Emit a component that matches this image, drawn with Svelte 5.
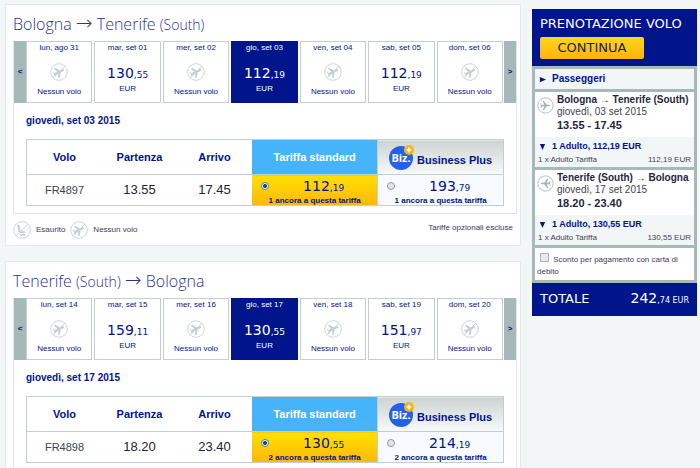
<script lang="ts">
  type Day = { label: string; price?: string; cents?: string; selected?: boolean }
  type Place = { city: string; area?: string }
  type Fare = { price: string; cents: string }

  interface Flight {
    id: string
    from: Place
    to: Place
    days: Day[]
    date: string
    number: string
    departure: string
    arrival: string
    standard: Fare
    business: Fare
    left: string
    legend: boolean
  }

  const flights: Flight[] = [
    {
      id: 'out',
      from: { city: 'Bologna' },
      to: { city: 'Tenerife', area: '(South)' },
      days: [
        { label: 'lun, ago 31' },
        { label: 'mar, set 01', price: '130', cents: '55' },
        { label: 'mer, set 02' },
        { label: 'gio, set 03', price: '112', cents: '19', selected: true },
        { label: 'ven, set 04' },
        { label: 'sab, set 05', price: '112', cents: '19' },
        { label: 'dom, set 06' }
      ],
      date: 'giovedì, set 03 2015',
      number: 'FR4897',
      departure: '13.55',
      arrival: '17.45',
      standard: { price: '112', cents: '19' },
      business: { price: '193', cents: '79' },
      left: '1 ancora a questa tariffa',
      legend: true
    },
    {
      id: 'back',
      from: { city: 'Tenerife', area: '(South)' },
      to: { city: 'Bologna' },
      days: [
        { label: 'lun, set 14' },
        { label: 'mar, set 15', price: '159', cents: '11' },
        { label: 'mer, set 16' },
        { label: 'gio, set 17', price: '130', cents: '55', selected: true },
        { label: 'ven, set 18' },
        { label: 'sab, set 19', price: '151', cents: '97' },
        { label: 'dom, set 20' }
      ],
      date: 'giovedì, set 17 2015',
      number: 'FR4898',
      departure: '18.20',
      arrival: '23.40',
      standard: { price: '130', cents: '55' },
      business: { price: '214', cents: '19' },
      left: '2 ancora a questa tariffa',
      legend: false
    }
  ]

  const trips = [
    {
      route: 'Bologna → Tenerife (South)',
      date: 'giovedì, 03 set 2015',
      hours: '13.55 - 17.45',
      amount: '112,19 EUR',
      back: false
    },
    {
      route: 'Tenerife (South) → Bologna',
      date: 'giovedì, 17 set 2015',
      hours: '18.20 - 23.40',
      amount: '130,55 EUR',
      back: true
    }
  ]

  let fares = $state<Record<string, string>>({ out: 'standard', back: 'standard' })
  let debitCard = $state(false)
</script>

{#snippet place(p: Place)}
  {p.city}{#if p.area}{' '}<small>{p.area}</small>{/if}
{/snippet}

{#snippet plane()}
  <path
    d="M5 9 L8.6 9 L6.8 4.6 L8.2 4.6 L11.4 9 L14.2 9 Q15.6 9.2 15.6 10 Q15.6 10.8 14.2 11 L11.4 11 L8.2 15.4 L6.8 15.4 L8.6 11 L6.2 11 L5 12.6 L4 12.6 L4.6 10 L4 7.4 L5 7.4 Z"
  />
{/snippet}

{#snippet noFlight()}
  <svg class="no-flight" viewBox="1 1 18 18" aria-hidden="true">
    <circle cx="10" cy="10" r="8.3" />
    <g transform="rotate(-25 10 10)">{@render plane()}</g>
    <path class="slash" d="M4 16 L16 4" />
  </svg>
{/snippet}

{#snippet fareCell(flight: Flight, kind: string, fare: Fare)}
  <td class="fare fare--{kind}">
    <label>
      <input type="radio" name="fare-{flight.id}" value={kind} bind:group={fares[flight.id]} />
      <span class="fare-price">{fare.price}<small>,{fare.cents}</small></span>
      <span class="fare-left">{flight.left}</span>
    </label>
  </td>
{/snippet}

<div class="page">
  <main>
    {#each flights as flight (flight.id)}
      <section class="card">
        <h2>{@render place(flight.from)} <span class="arrow">→</span> {@render place(flight.to)}</h2>

        <div class="panel">
          <div class="week">
            <button class="step" type="button">&lt;</button>
            <div class="days">
              {#each flight.days as day (day.label)}
                <button class="day" class:day--selected={day.selected} type="button">
                  <span class="day-label">{day.label}</span>
                  {#if day.price}
                    <span class="day-price">{day.price}<small>,{day.cents}</small></span>
                    <span>EUR</span>
                  {:else}
                    {@render noFlight()}
                    <span class="day-none">Nessun volo</span>
                  {/if}
                </button>
              {/each}
            </div>
            <button class="step" type="button">&gt;</button>
          </div>

          <h3>{flight.date}</h3>

          <table>
            <thead>
              <tr>
                <th class="col-time">Volo</th>
                <th class="col-time">Partenza</th>
                <th class="col-time">Arrivo</th>
                <th class="head-standard">Tariffa standard</th>
                <th class="head-business">
                  <div class="business">
                    <svg class="biz" viewBox="0 0 25 25" aria-hidden="true">
                      <circle cx="12" cy="13" r="12" fill="#2560e8" />
                      <text x="12" y="17" text-anchor="middle">Biz.</text>
                      <circle cx="20" cy="5" r="5" fill="#f0b61c" />
                      <path d="M20 2.6 V7.4 M17.6 5 H22.4" stroke="#fff" stroke-width="1.4" />
                    </svg>
                    <span>Business Plus</span>
                  </div>
                </th>
              </tr>
            </thead>
            <tbody>
              <tr>
                <td class="number">{flight.number}</td>
                <td class="time">{flight.departure}</td>
                <td class="time">{flight.arrival}</td>
                {@render fareCell(flight, 'standard', flight.standard)}
                {@render fareCell(flight, 'business', flight.business)}
              </tr>
            </tbody>
          </table>
        </div>

        {#if flight.legend}
          <div class="legend">
            <svg class="no-flight" viewBox="1 1 18 18" aria-hidden="true">
              <circle cx="10" cy="10" r="8.3" />
              <path d="M5 5 H7.4 L8.6 11.2 H13 V13 H7 Z M8 14 H13.4 V15.4 H8 Z" />
              <path class="slash" d="M4 16 L16 4" />
            </svg>
            <span>Esaurito</span>
            {@render noFlight()}
            <span>Nessun volo</span>
            <span class="legend-note">Tariffe opzionali escluse</span>
          </div>
        {/if}
      </section>
    {/each}
  </main>

  <aside>
    <header>
      <h1>PRENOTAZIONE VOLO</h1>
      <button class="continue" type="button">CONTINUA</button>
    </header>

    <div class="summary">
      <button class="toggle toggle--closed" type="button">
        <svg viewBox="0 0 8 8" aria-hidden="true"><path d="M1 1 L8 4 L1 7 Z" /></svg>
        Passeggeri
      </button>

      {#each trips as trip (trip.route)}
        <div class="trip">
          <div class="trip-info">
            <svg class="trip-icon" viewBox="0 0 20 20" aria-hidden="true">
              <circle cx="10" cy="10" r="9" />
              <g transform={trip.back ? 'rotate(180 10 10)' : undefined}>{@render plane()}</g>
            </svg>
            <div>
              <p class="trip-route">{trip.route}</p>
              <p class="trip-date">{trip.date}</p>
              <p class="trip-hours">{trip.hours}</p>
            </div>
          </div>
          <button class="toggle" type="button">
            <svg viewBox="0 0 8 8" aria-hidden="true"><path d="M1 1 H7 L4 8 Z" /></svg>
            1 Adulto, {trip.amount}
          </button>
          <p class="trip-fare"><span>1 x Adulto Tariffa</span><span>{trip.amount}</span></p>
        </div>
      {/each}

      <label class="debit">
        <input type="checkbox" bind:checked={debitCard} />
        Sconto per pagamento con carta di debito
      </label>
    </div>

    <footer>
      <span class="total-label">TOTALE</span>
      <span class="total">242<small>,74 EUR</small></span>
    </footer>
  </aside>
</div>

<style>
  :global(body) {
    background: #f3f6f6;
  }

  .page {
    --navy: #00148c;
    --line: #c3cfce;
    --steel: #a6b8b7;
    display: grid;
    grid-template-columns: minmax(0, 1fr) 165px;
    align-items: start;
    gap: 11px;
    padding: 4px 3px 0 5px;
    color: var(--navy);
    font-family: 'Liberation Sans', Arial, sans-serif;
    font-size: 8px;
    line-height: 12px;
  }

  h1,
  h2,
  h3,
  p {
    margin: 0;
  }

  button {
    padding: 0;
    border: none;
    background: none;
    color: inherit;
    font: inherit;
    cursor: pointer;
  }

  main {
    display: grid;
    gap: 15px;
  }

  .card {
    padding: 6px 3px 6px 7px;
    border: 1px solid #e4e9e9;
    background: #fff;
  }

  h2 {
    padding-bottom: 3px;
    color: #2a349c;
    font-family: 'Open Sans', sans-serif;
    font-size: 16px;
    font-weight: 300;
    line-height: 26px;
  }

  h2 small {
    font-size: 14px;
  }

  .arrow {
    font-family: 'DejaVu Sans', sans-serif;
    font-size: 20px;
    line-height: 20px;
  }

  .panel {
    padding-bottom: 7px;
    border: 1px solid #dfe5e5;
    border-top: none;
  }

  .week {
    display: flex;
    height: 62px;
  }

  .step {
    width: 12px;
    background: var(--steel);
    font-weight: 700;
  }

  .days {
    display: flex;
    flex: 1;
    gap: 2px;
    padding-right: 1px;
  }

  .day {
    display: flex;
    flex: 1;
    flex-direction: column;
    align-items: center;
    border: 1px solid var(--line);
    background: #fff;
  }

  .day--selected {
    border-color: var(--navy);
    background: var(--navy);
    color: #fff;
  }

  .day-label {
    margin-bottom: 9px;
  }

  .day-price {
    font-family: 'DejaVu Sans', Verdana, sans-serif;
    font-size: 14px;
    line-height: 20px;
  }

  .day-price small,
  .fare-price small {
    font-size: 9px;
    line-height: 9px;
  }

  .no-flight {
    flex: none;
    width: 18px;
    height: 18px;
    fill: #c3ced4;
  }

  .no-flight circle {
    fill: none;
    stroke: #cbd5da;
    stroke-width: 1;
  }

  .slash {
    fill: none;
    stroke: #cbd5da;
    stroke-width: 1;
  }

  .day-none {
    padding-top: 5px;
  }

  h3 {
    padding: 12px;
    font-size: 10px;
    font-weight: 700;
    line-height: 12px;
  }

  table {
    width: calc(100% - 24px);
    margin: 0 12px;
    border: 1px solid var(--line);
    border-collapse: collapse;
    table-layout: fixed;
  }

  th {
    height: 34px;
    padding: 0;
    border-bottom: 1px solid var(--line);
    font-size: 11px;
  }

  td {
    height: 30px;
    padding: 0;
    text-align: center;
  }

  .col-time {
    width: 75px;
  }

  .head-standard {
    background: #46b4fb;
    color: #fff;
  }

  .head-business {
    border-left: 1px solid var(--line);
    background: linear-gradient(#cdd2d2, #f8f9fa);
  }

  .business {
    display: flex;
    align-items: center;
    justify-content: center;
    gap: 3px;
  }

  .business span {
    padding-top: 6px;
  }

  .biz {
    width: 25px;
    height: 25px;
  }

  .biz text {
    fill: #fff;
    font-family: 'Open Sans', sans-serif;
    font-size: 11px;
    font-weight: 700;
  }

  .number {
    color: #42434f;
    font-size: 11px;
  }

  .time {
    color: #22232f;
    font-size: 13px;
  }

  .fare--standard {
    background: linear-gradient(#ffe000, #fdb70c);
  }

  .fare--business {
    border-left: 1px solid var(--line);
    background: #f7fafe;
  }

  .fare label {
    display: grid;
    grid-template-columns: 9px 1fr;
    padding: 0 9px;
    cursor: pointer;
  }

  .fare input {
    width: 8px;
    height: 8px;
    margin: 6px 0 0;
    border: 1px solid #8c98a4;
    border-radius: 50%;
    background: radial-gradient(#d8dcdc, #f4f4f0);
    appearance: none;
  }

  .fare input:checked {
    border-color: #4f7791;
    background: radial-gradient(#12507c 40%, #fff 55%);
  }

  .fare-price {
    padding-left: 9px;
    font-family: 'DejaVu Sans', Verdana, sans-serif;
    font-size: 14px;
    line-height: 20px;
  }

  .fare-left {
    grid-column: 1 / -1;
    font-weight: 700;
    line-height: 9px;
  }

  .legend {
    display: flex;
    align-items: center;
    gap: 5px;
    padding-top: 7px;
    color: #46365f;
  }

  .legend-note {
    margin: 0 4px 4px auto;
  }

  aside {
    margin-top: 5px;
    color: #42434f;
  }

  header {
    padding: 5px 8px 7px;
    background: var(--navy);
  }

  h1 {
    color: #fff;
    font-family: 'DejaVu Sans', Verdana, sans-serif;
    font-size: 13px;
    font-weight: 400;
    line-height: 20px;
    white-space: nowrap;
  }

  .continue {
    width: 104px;
    margin-top: 3px;
    border-radius: 2px;
    background: linear-gradient(#ffd61c, #fdb40a);
    color: #16204f;
    font-family: 'DejaVu Sans', Verdana, sans-serif;
    font-size: 13px;
    line-height: 22px;
  }

  .summary {
    display: grid;
    gap: 3px;
    padding: 3px;
    background: var(--steel);
  }

  .toggle {
    display: flex;
    align-items: center;
    gap: 6px;
    width: 100%;
    padding: 0 4px;
    background: #f3f6f6;
    color: var(--navy);
    font-size: 9px;
    font-weight: 700;
    line-height: 18px;
    text-align: left;
  }

  .toggle--closed {
    font-size: 10px;
    line-height: 20px;
  }

  .toggle svg {
    width: 7px;
    height: 7px;
    fill: currentColor;
  }

  .trip {
    background: #f3f6f6;
  }

  .trip-info {
    display: flex;
    gap: 3px;
    padding: 2px 2px 4px;
    background: #fff;
  }

  .trip-icon {
    flex: none;
    width: 17px;
    height: 17px;
    margin-top: 3px;
    fill: #a3b3b3;
  }

  .trip-icon circle {
    fill: none;
    stroke: #a3b3b3;
    stroke-width: 1;
  }

  .trip-route {
    color: #26263a;
    font-size: 10px;
    font-weight: 700;
    white-space: nowrap;
  }

  .trip-date {
    font-size: 10px;
  }

  .trip-hours {
    color: #26263a;
    font-size: 11px;
    font-weight: 700;
    line-height: 15px;
  }

  .trip-fare {
    display: flex;
    justify-content: space-between;
    padding: 0 3px 2px;
    line-height: 10px;
  }

  .debit {
    padding: 3px 2px 2px;
    background: #fff;
    color: #46365f;
  }

  .debit input {
    width: 9px;
    height: 9px;
    margin: 2px 2px 0 3px;
    border: 1px solid #aab4b8;
    background: #e6eaea;
    appearance: none;
  }

  .debit input:checked {
    background: var(--navy);
  }

  footer {
    display: flex;
    align-items: baseline;
    justify-content: space-between;
    padding: 5px 8px 7px;
    background: var(--navy);
    color: #fff;
    font-family: 'DejaVu Sans', Verdana, sans-serif;
    line-height: 20px;
  }

  .total-label {
    font-size: 13px;
  }

  .total {
    font-size: 14px;
  }

  .total small {
    font-size: 8px;
    line-height: 8px;
  }
</style>
